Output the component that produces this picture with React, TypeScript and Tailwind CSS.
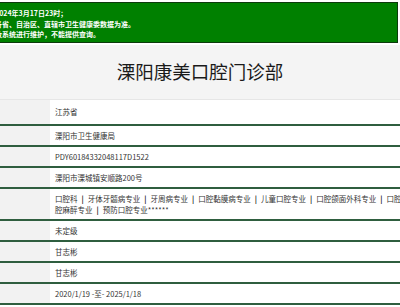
import React from 'react'

const font = { fontFamily: '"Noto Sans CJK SC", "Noto Sans", sans-serif' }

type Row = { value: React.ReactNode; h: string }

function Sep() {
  return <span className="mx-[4px] font-bold text-[#222]">|</span>
}

const rows: Row[] = [
  { value: '江苏省', h: 'h-[26px]' },
  { value: '溧阳市卫生健康局', h: 'h-[21px]' },
  { value: 'PDY60184332048117D1522', h: 'h-[21px]' },
  { value: '溧阳市溧城镇安顺路200号', h: 'h-[21px]' },
  {
    value: (
      <div className="leading-[11px] whitespace-nowrap">
        <div>
          口腔科<Sep />牙体牙髓病专业<Sep />牙周病专业<Sep />口腔黏膜病专业<Sep />儿童口腔专业<Sep />口腔颌面外科专业<Sep />口腔修复专业
        </div>
        <div>
          腔麻醉专业<Sep />预防口腔专业******
        </div>
      </div>
    ),
    h: 'h-[32px]',
  },
  { value: '未定级', h: 'h-[21px]' },
  { value: '甘志彬', h: 'h-[21px]' },
  { value: '甘志彬', h: 'h-[21px]' },
  { value: '2020/1/19 -至- 2025/1/18', h: 'h-[21px]' },
]

export default function App() {
  return (
    <div className="w-[400px] h-[307px] overflow-hidden bg-white" style={font}>
      {/* notice bar */}
      <div className="mt-[2px] mr-[2px] h-[41px] bg-[#008000] border border-[#0d3a0d] border-l-0 pt-[5px] text-[7px] leading-[10.5px] font-bold text-white overflow-hidden">
        <div className="-ml-[5px] whitespace-nowrap">
          <div>2024年3月17日23时；</div>
          <div>各省、自治区、直辖市卫生健康委数据为准。</div>
          <div>致系统进行维护，不能提供查询。</div>
        </div>
      </div>

      {/* title */}
      <div className="mt-[2px] h-[55px] bg-[#f4f4f4] border-b border-[#e6e6e6] flex items-center justify-center">
        <h1 className="text-[18.5px] text-[#1a1a1a] font-normal tracking-[0px]">溧阳康美口腔门诊部</h1>
      </div>

      {/* detail table */}
      <div className="text-[7.5px] text-[#333]">
        {rows.map((r, i) => (
          <div key={i} className={`flex box-border border-b-2 border-[#2f5e3f] ${r.h}`}>
            <div className="w-[50px] shrink-0 bg-[#f2f2f2]" />
            <div className="flex-1 flex items-center pl-[5px] bg-white overflow-hidden">{r.value}</div>
          </div>
        ))}
      </div>
    </div>
  )
}
